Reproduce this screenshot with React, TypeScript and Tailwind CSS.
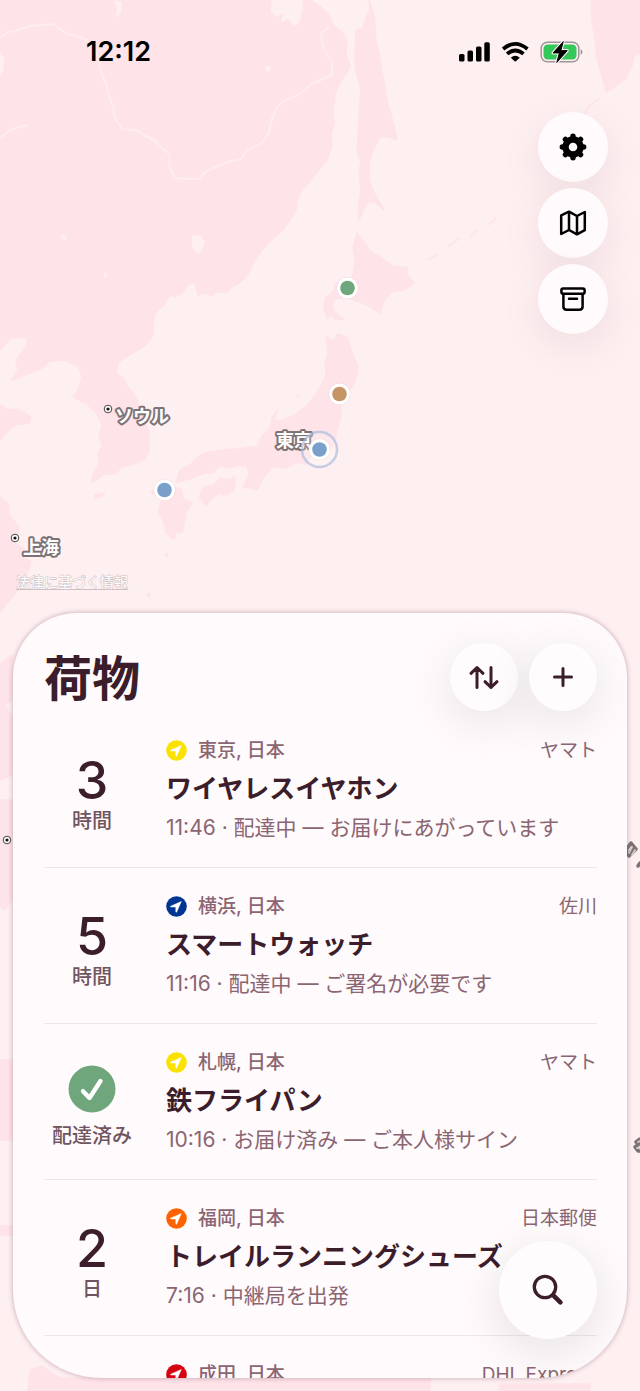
import React from "react";

type Parcel = {
  amount?: string;
  unit: string;
  color: string;
  place: string;
  carrier: string;
  name: string;
  detail: string;
};

const parcels: Parcel[] = [
  { amount: "3", unit: "時間", color: "#fbe100", place: "東京, 日本", carrier: "ヤマト", name: "ワイヤレスイヤホン", detail: "11:46 · 配達中 — お届けにあがっています" },
  { amount: "5", unit: "時間", color: "#003594", place: "横浜, 日本", carrier: "佐川", name: "スマートウォッチ", detail: "11:16 · 配達中 — ご署名が必要です" },
  { unit: "配達済み", color: "#fbe100", place: "札幌, 日本", carrier: "ヤマト", name: "鉄フライパン", detail: "10:16 · お届け済み — ご本人様サイン" },
  { amount: "2", unit: "日", color: "#ff6200", place: "福岡, 日本", carrier: "日本郵便", name: "トレイルランニングシューズ", detail: "7:16 · 中継局を出発" },
  { amount: "3", unit: "日", color: "#d40511", place: "成田, 日本", carrier: "DHL Express", name: "コーヒーミル", detail: "6:16 · 通関手続き中" },
];

function CityDot({ x, y }: { x: number; y: number }) {
  return (
    <g>
      <circle cx={x} cy={y} r="3.8" fill="#fff" stroke="#444" strokeWidth="1" />
      <circle cx={x} cy={y} r="1.6" fill="#111" />
    </g>
  );
}

function Pin({ x, y, fill }: { x: number; y: number; fill: string }) {
  return (
    <g>
      <circle cx={x} cy={y} r="11.2" fill="#e9cfd6" opacity="0.35" />
      <circle cx={x} cy={y} r="10.5" fill="#fff" />
      <circle cx={x} cy={y} r="7.3" fill={fill} />
    </g>
  );
}

function MapCanvas() {
  return (
    <svg aria-hidden="true" viewBox="0 0 640 1391" preserveAspectRatio="xMidYMin slice" className="absolute inset-0 h-full w-full">
      <rect width="640" height="1391" fill="#feeff1" />
      <g fill="#fee3e8" stroke="#fee3e8" strokeWidth="1.5" strokeLinejoin="round">
        <path d="M0 0H271L270 12 276 18 282 14 280 24 288 20 294 28 300 22 304 8 303 0H311L322 8 328 14 334 26 343 33 347 40 346 54 350 66 346 74 339 84 335 95 333 110 334 122 331 135 332 146 327 160 318 171 309 182 302 190 297 200 296 210 290 220 281 232 270 241 261 251 254 262 248 274 241 282 232 287 226 293 217 292 212 296 205 293 198 295 195 283 188 284 182 293 175 297 170 295 165 304 157 311 153 319 153 335 146 345 136 351 127 356 118 363 116 373 123 378 128 387 135 395 139 407 144 420 149 433 149 452 145 459 134 464 122 467 115 474 105 474 92 483 93 475 99 464 98 453 103 446 99 436 102 425 96 413 86 403 73 397 79 389 82 377 79 367 65 360 50 361 42 368 30 373 12 380 18 371 16 361 27 345 27 338 12 337 0 350Z" />
        <path d="M0 405 8 410 18 409 31 417 29 423 15 425 6 433 0 440Z" />
        <path d="M0 497 8 504 9 515 19 527 18 534 10 540 24 549 21 556 31 562 26 577 16 593 6 604 0 612Z" />
        <path d="M0 664 12 655V700L4 706 12 716V775L0 780Z M0 800H12V900L4 910 0 906Z M0 1060H14V1140H0Z M0 1226H12V1235H0Z M30 1370 42 1366 60 1378H430V1391H28Z M500 1384H590V1391H500Z" />
        <path d="M369 0 374 15 376 40 380 60 384 83 388 105 394 125 397 140 388 137 380 137 373 150 369 163 369 180 374 193 384 210 376 203 369 201 363 210 359 220 358 208 361 190 359 172 361 161 357 152 359 117 361 90 357 76 355 62 356 30 363 28 366 18 370 10Z" />
        <path d="M357 233 365 243 370 251 380 257 393 266 408 268 406 274 414 283 404 290 392 292 384 301 380 313 367 305 359 302 346 297 335 299 332 305 334 311 343 319 336 320 330 315 327 319 324 308 325 299 334 290 335 283 343 284 352 281 353 273 355 260 353 247Z" />
        <path d="M326 337 333 341 338 334 348 338 351 350 358 367 357 375 354 384 346 394 341 402 341 417 337 430 335 443 328 452 320 453 310 457 306 464 296 462 286 468 273 467 264 477 257 490 250 488 243 487 249 475 247 466 238 465 229 468 220 466 213 473 204 473 190 479 176 482 180 470 190 465 197 458 204 453 223 450 238 449 250 447 257 447 262 436 271 427 272 418 277 411 274 420 284 420 295 415 305 407 314 397 321 386 326 375 325 363 328 353Z" />
        <path d="M204 487 214 485 220 478 229 480 235 477 234 490 227 495 219 493 213 498 206 505 199 497Z" />
        <path d="M151 492 158 486 170 487 181 489 183 499 192 503 186 512 184 525 182 532 176 532 174 540 166 532 163 520 158 511 162 500Z" />
        <path d="M591 0H640V52L634 56 632 66 626 78 614 87 606 92 602 76 597 58 595 40 592 20Z" />
        <path d="M600 98 588 107 585 115M497 217 488 225M478 230 470 236M460 238 447 247M438 254 428 260M297 397 299 394" strokeWidth="2" fill="none" opacity=".8" />
        <path d="M95 495 105 493 101 497 95 498ZM165 554h3l-1 3ZM147 594h3l-1 3Z" />
      </g>
      <g fill="#feeff1">
        <path d="M192 235 201 236 205 242 201 252 196 253 192 246Z" />
        <path d="M114 0 122 2 121 12 116 18 117 9ZM60 235h5l2 5-5-1ZM104 272l4 4-4 2ZM265 66h5v5h-4ZM0 52 4 58 4 69 0 76Z" />
      </g>
      <path d="M0 38 8 32 15 31 30 26 53 24 60 29 68 34 78 36 88 41 94 48 98 58 101 72 106 83 109 96 112 104 115 118 122 129 136 130 144 135 154 140 166 151 170 156 169 166 175 178 187 179 199 179 205 172 216 167 231 161 241 159 247 151 262 143 269 133 272 118 277 107 286 100 300 94 312 84 332 75 332 62 323 47 321 33 329 27M0 138 12 129 28 125" fill="none" stroke="#feedef" strokeWidth="2" strokeLinejoin="round" />
      <CityDot x={108} y={409} />
      <CityDot x={15} y={538} />
      <CityDot x={7} y={840} />
      <g className="font-['Noto_Sans_CJK_JP',sans-serif] text-[18px] font-bold" fill="#fff" stroke="#7d7377" strokeWidth="4" strokeLinejoin="round" style={{ paintOrder: "stroke" }}>
        <text x="115" y="423">ソウル</text>
        <text x="276" y="447">東京</text>
        <text x="23" y="554">上海</text>
      </g>
      <g fill="none" strokeLinecap="round" strokeLinejoin="round">
        <path d="M629 856 626 850 631 843 636 849 629 856M631 851 634 847M638 866 640 863M640 1139 636 1142 639 1144 635 1147 638 1151 640 1151" stroke="#7d7377" strokeWidth="3.5" />
        <path d="M629 853 632 847M632 855 635 850M638 1142 640 1141M637 1148 640 1148" stroke="#d5cbc7" strokeWidth="1.8" />
      </g>
      <circle cx="319.500" cy="449.500" r="17.500" fill="#fff" fillOpacity=".2" stroke="#a6b8dc" strokeOpacity=".65" strokeWidth="2.500" />
      <Pin x={347.5} y={288} fill="#6fa67c" />
      <Pin x={339.5} y={394} fill="#c69467" />
      <Pin x={319.5} y={449.5} fill="#7a9fca" />
      <Pin x={164.5} y={490} fill="#7a9fca" />
    </svg>
  );
}

function StatusBar() {
  return (
    <header className="flex h-[104px] items-center justify-between pr-[56px] pl-[86px]">
      <time className="text-[27px] leading-8 font-semibold text-black">12:12</time>
      <svg aria-label="電波、Wi-Fi、充電中" role="img" width="126" height="26" viewBox="0 0 126 26">
        <g fill="#000">
          <rect x="1" y="15" width="5.500" height="7.500" rx="1.600" />
          <rect x="9.500" y="11.500" width="5.500" height="11" rx="1.600" />
          <rect x="18" y="7.500" width="5.500" height="15" rx="1.600" />
          <rect x="26.300" y="3.200" width="5.500" height="19.300" rx="1.600" />
          <path d="M56.700 22.300 52.800 18.700Q57.300 14.800 61.800 18.700L57.900 22.300Q57.300 22.900 56.700 22.300Z" />
        </g>
        <g fill="none" stroke="#000" strokeWidth="3.800">
          <path d="M45.100 10Q57.300-.2 69.500 10" />
          <path d="M49.100 14.900Q57.300 8 65.500 14.900" />
        </g>
        <rect x="83.200" y="3.200" width="37.600" height="19.600" rx="6.200" fill="none" stroke="#a09699" strokeWidth="1.500" />
        <path d="M122.600 10.200V15.800Q124.500 15 124.500 13T122.600 10.200Z" fill="#a09699" />
        <rect x="85.500" y="5.500" width="33" height="15" rx="4.200" fill="#34c759" />
        <path d="M105.300 2.500 95 14H101.300L98.800 23.500 109.300 11.600H102.900Z" fill="#000" stroke="#feeff1" strokeWidth="3" strokeLinejoin="round" style={{ paintOrder: "stroke" }} />
        <path d="M105.300 2.500 95 14H101.300L98.800 23.500 109.300 11.600H102.900Z" fill="#000" stroke="#000" strokeWidth=".8" strokeLinejoin="round" />
      </svg>
    </header>
  );
}

function GearIcon() {
  return (
    <svg aria-hidden="true" width="30" height="30" viewBox="-15 -15 30 30" fill="none" stroke="#000">
      <circle r="7.500" strokeWidth="6.400" />
      {[0, 45, 90, 135, 180, 225, 270, 315].map((a) => (
        <path key={a} d="M0-8.500V-10.700" strokeWidth="5.400" strokeLinecap="round" transform={`rotate(${a})`} />
      ))}
    </svg>
  );
}

function FoldedMapIcon() {
  return (
    <svg aria-hidden="true" width="30" height="30" viewBox="0 0 30 30" fill="none" stroke="#000" strokeWidth="2.500" strokeLinejoin="round">
      <path d="M3.200 7.300 11 3.700 19 8 26.800 4V22.200L19 26.300 11 22 3.200 26Z" />
      <path d="M11 3.700V22M19 8V26.300" />
    </svg>
  );
}

function ArchiveIcon() {
  return (
    <svg aria-hidden="true" width="30" height="30" viewBox="0 0 30 30" fill="none" stroke="#000" strokeWidth="2.500" strokeLinecap="round" strokeLinejoin="round">
      <rect x="3.400" y="4.500" width="23.200" height="5.200" rx="1.800" />
      <path d="M5.400 10V22.500Q5.400 25.700 8.600 25.700H21.400Q24.600 25.700 24.600 22.500V10M11 14.800H19" />
    </svg>
  );
}

function RoundButton({ label, children }: { label: string; children: React.ReactNode }) {
  return (
    <button type="button" aria-label={label} className="grid size-[70px] place-items-center rounded-full bg-[#fffafb] shadow-[0_12px_44px_rgba(60,20,40,0.08)]">
      {children}
    </button>
  );
}

function SheetButton({ label, children }: { label: string; children: React.ReactNode }) {
  return (
    <button type="button" aria-label={label} className="grid size-[68px] place-items-center rounded-full bg-[#fffcfd] shadow-[0_12px_50px_rgba(30,20,25,0.10)]">
      {children}
    </button>
  );
}

function ParcelRow({ parcel }: { parcel: Parcel }) {
  return (
    <li className="flex h-[156px] shrink-0 items-center gap-[26px] border-b border-[#eee8ea]">
      <div className="flex w-24 shrink-0 flex-col items-center pt-3">
        {parcel.amount ? (
          <span className="text-[52px] leading-[50px] font-medium text-[#3b1d2b]">{parcel.amount}</span>
        ) : (
          <svg aria-hidden="true" width="48" height="48" viewBox="0 0 48 48" className="mb-2">
            <circle cx="24" cy="24" r="23.500" fill="#6fa67c" />
            <path d="M15 26.200 21.500 33 32.500 16" fill="none" stroke="#fff" strokeWidth="4.400" strokeLinecap="round" strokeLinejoin="round" />
          </svg>
        )}
        <span className="text-[20px] leading-[30px] font-medium whitespace-nowrap text-[#6f5560]">{parcel.unit}</span>
      </div>
      <div className="min-w-0 flex-1">
        <div className="flex items-center gap-[11px] text-[19px] leading-[26px] text-[#8a6572]">
          <svg aria-hidden="true" width="21" height="21" viewBox="0 0 21 21" className="shrink-0">
            <circle cx="10.500" cy="10.500" r="10.300" fill={parcel.color} />
            <path d="M15.300 5.500 4.600 10.200Q4.200 10.900 5 11H9.800V15.900Q10.100 16.600 10.700 16Z" fill="#fff" stroke="#fff" strokeWidth=".5" strokeLinejoin="round" />
          </svg>
          <span className="flex-1 font-medium">{parcel.place}</span>
          <span>{parcel.carrier}</span>
        </div>
        <h2 className="truncate text-[26px] leading-[50px] font-semibold text-[#3b1d2b]">{parcel.name}</h2>
        <p className="truncate text-[21px] leading-[28px] text-[#8a6572]">{parcel.detail}</p>
      </div>
    </li>
  );
}

export default function App() {
  return (
    <main lang="ja" className="relative flex h-screen flex-col overflow-hidden bg-[#feeff1] font-[Inter,'Noto_Sans_CJK_JP',sans-serif]">
      <MapCanvas />
      <section aria-label="地図" className="relative flex h-[613px] shrink-0 flex-col">
        <StatusBar />
        <nav aria-label="地図の操作" className="mt-2 mr-8 flex flex-col gap-1.5 self-end">
          <RoundButton label="設定"><GearIcon /></RoundButton>
          <RoundButton label="地図"><FoldedMapIcon /></RoundButton>
          <RoundButton label="アーカイブ"><ArchiveIcon /></RoundButton>
        </nav>
        <a href="#legal" className="mt-auto mb-5 ml-4 self-start text-[14px] leading-[22px] text-white underline underline-offset-2 [-webkit-text-stroke:1px_#cdbfc3] [paint-order:stroke]">
          法律に基づく情報
        </a>
      </section>
      <section className="relative mx-[13px] mb-[13px] min-h-0 flex-1 overflow-hidden rounded-t-[64px] rounded-b-[88px] bg-[#fffafb] pr-[30px] pl-[31px] shadow-[0_0_5px_rgba(80,30,50,0.35)]">
        <div className="flex items-center justify-between pt-[30px] pb-px">
          <h1 className="pt-1 text-[48px] leading-[64px] font-bold text-[#3b1d2b]">荷物</h1>
          <div className="flex gap-[11px]">
            <SheetButton label="並べ替え">
              <svg aria-hidden="true" width="32" height="30" viewBox="0 0 32 30" fill="none" stroke="#3b1d2b" strokeWidth="3" strokeLinecap="round" strokeLinejoin="round">
                <path d="M9 25.500V5.500M3 11.300 9 5.500 15 11.300M23 5.500V25.500M17 19.700 23 25.500 29 19.700" />
              </svg>
            </SheetButton>
            <SheetButton label="荷物を追加">
              <svg aria-hidden="true" width="24" height="24" viewBox="0 0 24 24" fill="none" stroke="#3b1d2b" strokeWidth="3" strokeLinecap="round">
                <path d="M12 3.500V20.500M3.500 12H20.500" />
              </svg>
            </SheetButton>
          </div>
        </div>
        <ul className="flex flex-col">
          {parcels.map((p) => (
            <ParcelRow key={p.name} parcel={p} />
          ))}
        </ul>
        <button type="button" aria-label="検索" className="absolute right-[30px] bottom-[39px] grid size-[98px] place-items-center rounded-full bg-[#fffcfd] shadow-[0_12px_50px_rgba(30,20,25,0.11)]">
          <svg aria-hidden="true" width="34" height="34" viewBox="0 0 34 34" fill="none" stroke="#3b1d2b" strokeLinecap="round">
            <circle cx="14" cy="14" r="10.700" strokeWidth="3.300" />
            <path d="M22.300 22.300 29.400 29.400" strokeWidth="4.600" />
          </svg>
        </button>
      </section>
    </main>
  );
}
